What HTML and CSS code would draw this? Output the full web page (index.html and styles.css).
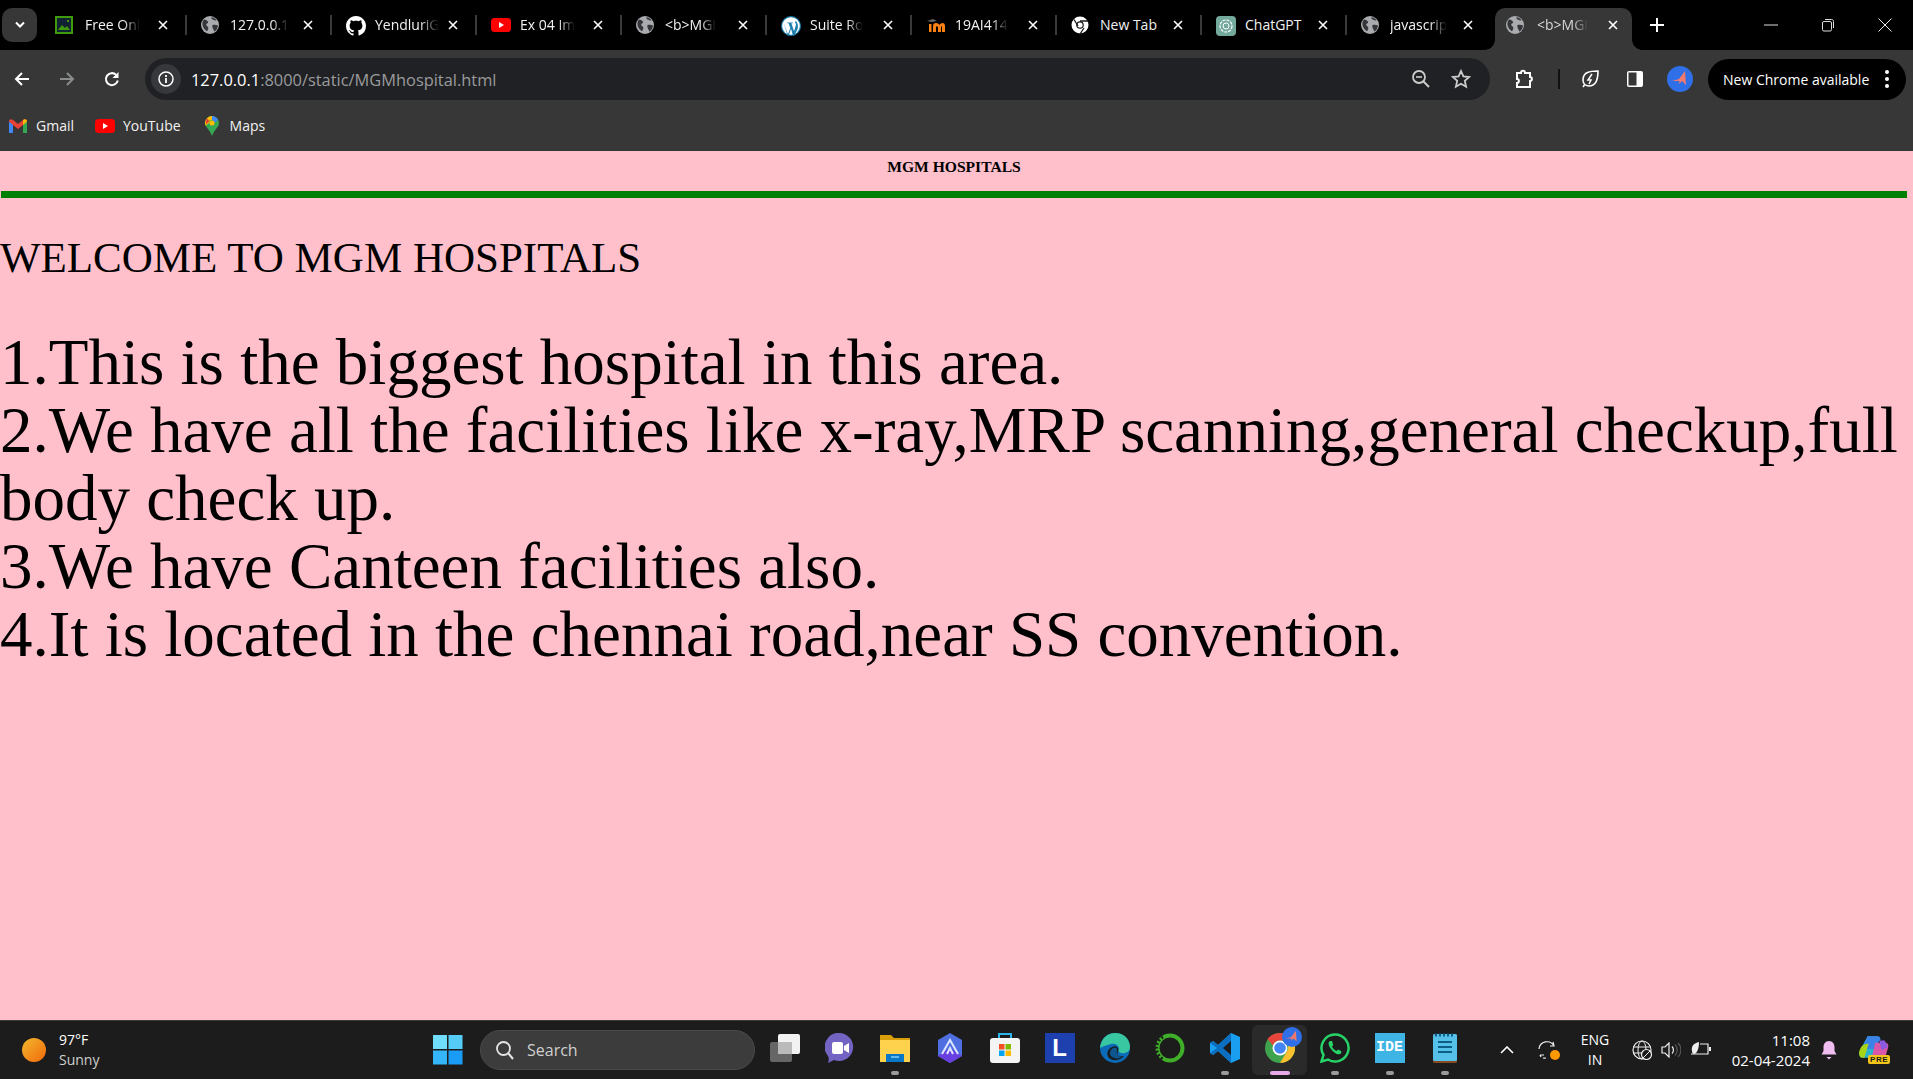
FILE: index.html
```html
<!DOCTYPE html>
<html lang="en">
<head>
<meta charset="utf-8">
<title>MGM Hospital</title>
<link rel="stylesheet" href="styles.css">
</head>
<body>
<svg class="sprite" width="0" height="0" aria-hidden="true">
  <defs>
    <symbol id="globe" viewBox="0 0 18 18">
      <circle cx="9" cy="9" r="9" fill="#a9abae"/>
      <path d="M3 3.500c2 .2 3.400 1 4 2.200.5 1-.5 1.700-1.600 2-.6 1.500.6 2.500 1.600 3 .8 1 .2 2.800-1 4.500C3 13.500 1 10 1.500 7 1.700 5.500 2.200 4.500 3 3.500zM10.500 1.200c2 .3 3.800 1.300 5 3-1.300.5-2.300.1-3-.5-1-.2-2.300-.5-2-2.500zM11.500 9c1.500-.4 4-.4 5.500.5-.2 2.500-1.500 4.800-3.500 6.300-.5-1.800-2.800-4.300-2-6.800z" fill="#35363a"/>
    </symbol>
    <symbol id="x" viewBox="0 0 12 12">
      <path d="M2 2l8 8M10 2l-8 8" stroke="#fff" stroke-width="1.600" fill="none"/>
    </symbol>
  </defs>
</svg>

<header class="chrome">
  <div class="tabstrip">
    <button class="tab-menu"><svg width="12" height="8" viewBox="0 0 12 8"><path d="M2 1.500l4 4 4-4" stroke="#fff" stroke-width="2" fill="none"/></svg></button>
    <div class="tab tab-first">
      <svg class="fav" width="18" height="18" viewBox="0 0 18 18"><rect x="1" y="1" width="16" height="16" fill="#123" stroke="#3f9b0b" stroke-width="2"/><path d="M3 14l4-5 3 3 2-2 3 4z" fill="#3f9b0b"/><rect x="12" y="4" width="2" height="2" fill="#3f9b0b"/></svg>
      <span class="title">Free Onl</span><svg class="close"><use href="#x"/></svg>
    </div>
    <div class="tab">
      <svg class="fav" width="18" height="18"><use href="#globe"/></svg>
      <span class="title">127.0.0.1</span><svg class="close"><use href="#x"/></svg>
    </div>
    <div class="tab">
      <svg class="fav" width="20" height="20" viewBox="0 0 16 16"><path fill="#fff" d="M8 0C3.580 0 0 3.580 0 8c0 3.540 2.290 6.530 5.470 7.590.4.070.55-.17.55-.38v-1.340c-2.230.49-2.700-1.070-2.700-1.070-.36-.92-.89-1.170-.89-1.170-.73-.5.050-.49.050-.49.8.060 1.230.83 1.230.83.71 1.220 1.870.870 2.330.660.070-.52.280-.87.510-1.070-1.780-.2-3.640-.89-3.640-3.950 0-.87.310-1.590.820-2.150-.08-.2-.36-1.020.080-2.120 0 0 .67-.21 2.200.82.640-.18 1.320-.27 2-.27s1.360.09 2 .27c1.530-1.040 2.200-.82 2.200-.82.440 1.100.160 1.920.080 2.120.51.560.820 1.270.820 2.150 0 3.070-1.870 3.750-3.650 3.950.290.250.540.730.540 1.480v2.200c0 .210.150.460.550.380A8.010 8.010 0 0 0 16 8c0-4.420-3.580-8-8-8z"/></svg>
      <span class="title">YendluriG</span><svg class="close"><use href="#x"/></svg>
    </div>
    <div class="tab">
      <svg class="fav fav-wide" width="20" height="14" viewBox="0 0 20 14"><rect width="20" height="14" rx="3.500" fill="#f00"/><path d="M8 4l5 3-5 3z" fill="#fff"/></svg>
      <span class="title">Ex 04 Im</span><svg class="close"><use href="#x"/></svg>
    </div>
    <div class="tab">
      <svg class="fav" width="18" height="18"><use href="#globe"/></svg>
      <span class="title">&lt;b&gt;MGI</span><svg class="close"><use href="#x"/></svg>
    </div>
    <div class="tab">
      <svg class="fav" width="20" height="20" viewBox="0 0 20 20"><circle cx="10" cy="10" r="10" fill="#1d7fad"/><circle cx="10" cy="10" r="8.800" fill="#fff"/><path d="M2.400 6.500L7 18.300l2.300-6.400-1.700-4.600H6.300V6.500h5.500v.8h-1.400L13 15.200l1.800-5.700c.5-1.700-.3-2.300-.8-2.700-.4-.8.300-1.700 1.200-1.500 1.700 2.200 2.300 5.300 1.300 8l-3.400 6.600h-1L10 12.800l-2.300 6.900h-.9z" fill="#1d7fad"/></svg>
      <span class="title">Suite Ro</span><svg class="close"><use href="#x"/></svg>
    </div>
    <div class="tab">
      <svg class="fav fav-wide" width="20" height="16" viewBox="0 0 20 16"><path d="M1 3l6-2 4 2-5 1z" fill="#666"/><path d="M3 14V6h2.500v8zM7 14V8c0-2 1-3 3-3s3 1 3.500 2c.5-1 1.500-2 3-2s2.500 1 2.500 3v6h-3V8.500h-1V14H12V8.500h-2V14z" fill="#f98012"/></svg>
      <span class="title">19AI414</span><svg class="close"><use href="#x"/></svg>
    </div>
    <div class="tab">
      <svg class="fav" width="18" height="18" viewBox="0 0 18 18"><circle cx="9" cy="9" r="8.500" fill="#fff"/><circle cx="9" cy="9" r="3.800" fill="#1a1a1a"/><circle cx="9" cy="9" r="2.600" fill="#fff"/><path d="M3 3.500L7 10M9 5h8M13 12l-4 6" stroke="#1a1a1a" stroke-width="1.300"/></svg>
      <span class="title title-full">New Tab</span><svg class="close"><use href="#x"/></svg>
    </div>
    <div class="tab">
      <svg class="fav" width="20" height="20" viewBox="0 0 20 20"><rect width="20" height="20" rx="4" fill="#74aa9c"/><circle cx="10" cy="10" r="6" fill="none" stroke="#fff" stroke-width="1.200" stroke-dasharray="3 1"/><circle cx="10" cy="10" r="3" fill="none" stroke="#fff"/></svg>
      <span class="title title-full">ChatGPT</span><svg class="close"><use href="#x"/></svg>
    </div>
    <div class="tab tab-last">
      <svg class="fav" width="18" height="18"><use href="#globe"/></svg>
      <span class="title">javascrip</span><svg class="close"><use href="#x"/></svg>
    </div>
    <div class="tab tab-active">
      <svg class="fav" width="18" height="18"><use href="#globe"/></svg>
      <span class="title">&lt;b&gt;MGI</span><svg class="close"><use href="#x"/></svg>
    </div>
    <svg class="newtab" width="14" height="14" viewBox="0 0 14 14"><path d="M7 0v14M0 7h14" stroke="#fff" stroke-width="2"/></svg>
    <div class="winctl">
      <svg width="14" height="14" viewBox="0 0 14 14"><path d="M0 7h14" stroke="#ddd"/></svg>
      <svg width="14" height="14" viewBox="0 0 14 14"><rect x="1.500" y="3.500" width="9" height="9.500" rx="1.500" fill="none" stroke="#ddd"/><path d="M4 1.500h6.500c1.500 0 2 .8 2 2V10" fill="none" stroke="#ddd"/></svg>
      <svg width="14" height="14" viewBox="0 0 14 14"><path d="M.5.500l13 13M13.500.500l-13 13" stroke="#eee"/></svg>
    </div>
  </div>

  <div class="toolbar">
    <svg class="tb-back" width="16" height="16" viewBox="0 0 16 16"><path d="M15 8H2M8 2L2 8l6 6" stroke="#fff" stroke-width="2" fill="none"/></svg>
    <svg class="tb-fwd" width="16" height="16" viewBox="0 0 16 16"><path d="M1 8h13M8 2l6 6-6 6" stroke="#8a8b8d" stroke-width="2" fill="none"/></svg>
    <svg class="tb-reload" width="16" height="16" viewBox="0 0 16 16"><path d="M13.800 9.500A6 6 0 1 1 12 3.700" stroke="#fff" stroke-width="2" fill="none"/><path d="M14.500 1v6h-6z" fill="#fff"/></svg>
    <div class="omnibox">
      <span class="site-info"><svg width="16" height="16" viewBox="0 0 16 16"><circle cx="8" cy="8" r="7" fill="none" stroke="#fff" stroke-width="1.500"/><path d="M8 7v5M8 4v2" stroke="#fff" stroke-width="1.800"/></svg></span>
      <span class="url"><b class="host">127.0.0.1</b>:8000/static/MGMhospital.html</span>
      <svg class="omni-zoom" width="20" height="20" viewBox="0 0 20 20"><circle cx="8" cy="8" r="6" fill="none" stroke="#ccc" stroke-width="1.800"/><path d="M5 8h6" stroke="#ccc" stroke-width="1.600"/><path d="M12.500 12.500L18 18" stroke="#ccc" stroke-width="2"/></svg>
      <svg class="omni-star" width="20" height="20" viewBox="0 0 20 20"><path d="M10 2l2.400 5.400 5.800.6-4.400 3.900 1.300 5.800L10 14.700l-5.100 3 1.300-5.800L1.800 8l5.800-.6z" fill="none" stroke="#ccc" stroke-width="1.800"/></svg>
    </div>
    <svg class="ext" width="20" height="20" viewBox="0 0 20 20"><path d="M3 4h4c0-3 4-3 4 0h5v4c2.500 0 2.500 4 0 4v6H3v-4c2.500 0 2.500-4 0-4z" fill="none" stroke="#fff" stroke-width="2"/></svg>
    <span class="tool-sep"></span>
    <svg class="leaf" width="20" height="20" viewBox="0 0 20 20"><path d="M18 2c-8 0-15 1-15 9 0 4 3 6 6 6 7 0 9-7 9-15zM3 18l2-3" fill="none" stroke="#fff" stroke-width="1.600"/><path d="M12 5l-4 6h3l-2 4" fill="none" stroke="#fff" stroke-width="1.500"/></svg>
    <svg class="panel" width="18" height="18" viewBox="0 0 18 18"><rect x="1" y="1" width="16" height="16" rx="2" fill="#fff"/><rect x="2.500" y="2.500" width="8" height="13" fill="#373737"/></svg>
    <svg class="avatar" width="26" height="26" viewBox="0 0 26 26"><circle cx="13" cy="13" r="13" fill="#2f6fe8"/><path d="M5 15l7-2 6-8 1 14-4-4-3 3 .5-3z" fill="#f27a6c"/></svg>
    <div class="update"><span>New Chrome available</span><svg width="4" height="18" viewBox="0 0 4 18"><circle cx="2" cy="2" r="2" fill="#fff"/><circle cx="2" cy="9" r="2" fill="#fff"/><circle cx="2" cy="16" r="2" fill="#fff"/></svg></div>
  </div>

  <nav class="bookmarks">
    <a class="bm"><svg width="18" height="14" viewBox="0 0 18 14"><path d="M0 2.500V14h4V5z" fill="#4285f4"/><path d="M14 5v9h4V2.500z" fill="#34a853"/><path d="M0 2.500C0 .5 2 -.5 4 1l5 4 5-4c2-1.500 4-.5 4 1.500L14 6l-5 4-5-4z" fill="#ea4335"/><path d="M14 1c2-1.500 4-.5 4 1.500L14 6z" fill="#fbbc04"/></svg><span>Gmail</span></a>
    <a class="bm"><svg width="20" height="14" viewBox="0 0 20 14"><rect width="20" height="14" rx="3.500" fill="#f00"/><path d="M8 4l5 3-5 3z" fill="#fff"/></svg><span>YouTube</span></a>
    <a class="bm"><svg width="14" height="20" viewBox="0 0 14 20"><path d="M7 0a7 7 0 0 1 7 7c0 4-5 7-7 13-2-6-7-9-7-13a7 7 0 0 1 7-7z" fill="#34a853"/><path d="M2 2.200A7 7 0 0 1 7 0v4a3 3 0 0 0-3 3L.6 9.800A7 7 0 0 1 2 2.200z" fill="#fbbc04"/><path d="M7 0a7 7 0 0 1 6 3.500L9.500 7A3 3 0 0 0 7 4z" fill="#4285f4"/><path d="M2 2.200L4.500 5 1 8.500A7 7 0 0 1 2 2.200z" fill="#ea4335"/><circle cx="7" cy="7" r="2.500" fill="#fbbc04"/></svg><span>Maps</span></a>
  </nav>
</header>

<main class="page">
  <h1 class="page-title">MGM HOSPITALS</h1>
  <hr class="rule">
  <h2 class="welcome">WELCOME TO MGM HOSPITALS</h2>
  <p class="facts">1.This is the biggest hospital in this area.<br>2.We have all the facilities like x-ray,MRP scanning,general checkup,full<br>body check up.<br>3.We have Canteen facilities also.<br>4.It is located in the chennai road,near SS convention.</p>
</main>

<footer class="taskbar">
  <div class="weather">
    <span class="sun"></span>
    <div class="weather-text"><span class="temp">97°F</span><span class="cond">Sunny</span></div>
  </div>
  <svg class="start" width="30" height="30" viewBox="0 0 30 30"><rect x="0" y="0" width="14" height="14" fill="#6fdcfb"/><rect x="15.500" y="0" width="14" height="14" fill="#55ccf8"/><rect x="0" y="15.500" width="14" height="14" fill="#33b5f8"/><rect x="15.500" y="15.500" width="14" height="14" fill="#1a9bf5"/></svg>
  <div class="search"><svg width="20" height="20" viewBox="0 0 20 20"><circle cx="8.500" cy="8.500" r="6.500" fill="none" stroke="#e5e5e5" stroke-width="1.800"/><path d="M13 13l5 6" stroke="#e5e5e5" stroke-width="2"/></svg><span>Search</span></div>
  <div class="pinned">
    <div class="pin"><svg width="30" height="30" viewBox="0 0 30 30"><rect x="0" y="9" width="22" height="20" rx="2" fill="#666"/><rect x="8" y="1" width="22" height="20" rx="2" fill="#f2f2f2"/><rect x="8" y="9" width="14" height="12" fill="#bbb"/></svg></div>
    <div class="pin"><svg width="30" height="30" viewBox="0 0 30 30"><path d="M15 0a14 14 0 1 1-6 27l-6 3c1-3 1-5 0-7A14 14 0 0 1 15 0z" fill="#7364c4"/><rect x="7" y="9" width="11" height="12" rx="2" fill="#fff"/><path d="M19 13l5-3v10l-5-3z" fill="#fff"/></svg></div>
    <div class="pin"><svg width="30" height="30" viewBox="0 0 30 30"><path d="M0 2h11l3 3h16v24H0z" fill="#d99e0b"/><rect x="0" y="7" width="30" height="22" fill="#ffd24d"/><path d="M6 21h18v8H6z" fill="#0a78c8"/><path d="M11 24h8" stroke="#7fd0f5" stroke-width="1.500"/></svg><i class="dot"></i></div>
    <div class="pin"><svg width="28" height="30" viewBox="0 0 28 30"><path d="M14 0l12 7v16l-12 7-12-7V7z" fill="#4f6fe0"/><path d="M14 15l12 8-12 7-12-7z" fill="#6a3fe0"/><path d="M6 21L14 7l8 14M11 21l3-6 3 6" fill="none" stroke="#dfe6ff" stroke-width="2"/></svg></div>
    <div class="pin"><svg width="30" height="30" viewBox="0 0 30 30"><path d="M9 6V1h12v5" fill="none" stroke="#2cb5e8" stroke-width="2"/><rect y="5" width="30" height="25" rx="3" fill="#f4f4f4"/><rect x="9" y="11" width="5.500" height="5.500" fill="#f25022"/><rect x="15.500" y="11" width="5.500" height="5.500" fill="#7fba00"/><rect x="9" y="17.500" width="5.500" height="5.500" fill="#00a4ef"/><rect x="15.500" y="17.500" width="5.500" height="5.500" fill="#ffb900"/></svg></div>
    <div class="pin"><span class="app-l">L</span></div>
    <div class="pin"><svg width="30" height="30" viewBox="0 0 30 30"><circle cx="15" cy="15" r="15" fill="#0c6bb8"/><path d="M0 15C1 5 8 0 15 0c9 0 15 6 15 14 0 5-5 7-9 6-3-1-3-3-2-5-1-4-5-5-8-4-5 1-9 3-11 4z" fill="#38c7a0"/><path d="M12 14c4-2 8 1 6 5s2 5 6 4c-3 4-10 6-15 2-3-3-2-9 3-11z" fill="#1a1c1e"/><path d="M13 15c3-1 5 1 4 3s1 6 5 6c-3 2-8 2-11-1-2-3-1-6 2-8z" fill="#0f558f"/></svg></div>
    <div class="pin"><svg width="30" height="30" viewBox="0 0 30 30"><circle cx="15" cy="15" r="12.500" fill="none" stroke="#3fae29" stroke-width="4"/><path d="M8 4a12.500 12.500 0 0 0 0 22" fill="none" stroke="#1c1c1c" stroke-width="3" stroke-dasharray="2 2"/></svg></div>
    <div class="pin"><svg width="30" height="30" viewBox="0 0 30 30"><path d="M21 0l9 4v22l-9 4L8 18l-5 4-3-2v-10l3-2 5 4z" fill="#1a9ff0"/><path d="M21 0v30L8 18l-5 4-3-2 7-5-7-5 3-2 5 4z" fill="#0a6fc0"/><path d="M21 8l-8 7 8 7z" fill="#1c1c1c"/></svg><i class="dot"></i></div>
    <div class="pin pin-active"><svg width="30" height="30" viewBox="0 0 30 30"><circle cx="15" cy="15" r="15" fill="#3fa34d"/><path d="M15 0a15 15 0 0 1 13 7.500H15a7.500 7.500 0 0 0-7 5L2.500 6A15 15 0 0 1 15 0z" fill="#e8453c"/><path d="M28 7.500A15 15 0 0 1 15 30l6.500-11A7.500 7.500 0 0 0 21 9z" fill="#fbc02d"/><circle cx="15" cy="15" r="7.500" fill="#fff"/><circle cx="15" cy="15" r="5.800" fill="#4285f4"/></svg><svg class="pin-badge" width="20" height="20" viewBox="0 0 26 26"><circle cx="13" cy="13" r="13" fill="#2f6fe8"/><path d="M5 15l7-2 6-8 1 14-4-4-3 3 .5-3z" fill="#f27a6c"/></svg><i class="dot dot-active"></i></div>
    <div class="pin"><svg width="30" height="30" viewBox="0 0 30 30"><path d="M15 1.500a13.500 13.500 0 1 1-7 25L1.500 28.500 3.500 22A13.500 13.500 0 0 1 15 1.500z" fill="none" stroke="#25d366" stroke-width="2.500"/><path d="M10 8c-2 1-2 4 1 8s6 6 9 5c1.500-.5 1.500-2 1-3l-3-1.500-1.500 1.500c-2-.8-3.500-2.500-4.500-4.500l1.300-1.500L12 8z" fill="#25d366"/></svg><i class="dot"></i></div>
    <div class="pin"><span class="app-ide">IDE</span><i class="dot"></i></div>
    <div class="pin"><svg width="24" height="30" viewBox="0 0 24 30"><rect y="1" width="24" height="29" rx="1.500" fill="#8a4a20"/><rect y="1" width="24" height="27" rx="1.500" fill="#55c0e8"/><path d="M5 9h14M5 14h14M5 19h14" stroke="#0d5e85" stroke-width="2"/><path d="M2 2h20" stroke="#0d5e85" stroke-width="3" stroke-dasharray="2 2"/></svg><i class="dot"></i></div>
  </div>
  <div class="tray">
    <svg class="tray-chev" width="14" height="8" viewBox="0 0 14 8"><path d="M1 7l6-6 6 6" stroke="#fff" stroke-width="1.600" fill="none"/></svg>
    <span class="tray-sync"><svg width="20" height="20" viewBox="0 0 20 20"><path d="M1 9a8 8 0 0 1 15-3M15 2l1 4h-4M2 15h4M2 15l1 2M5 18a8 8 0 0 0 3 0" fill="none" stroke="#eee" stroke-width="1.200"/></svg><i class="sync-dot"></i></span>
    <div class="lang"><span>ENG</span><span>IN</span></div>
    <svg class="tray-net" width="20" height="20" viewBox="0 0 20 20"><circle cx="10" cy="10" r="9" fill="none" stroke="#eee" stroke-width="1.200"/><ellipse cx="10" cy="10" rx="4" ry="9" fill="none" stroke="#eee"/><path d="M1 7h18M1 13h18" stroke="#eee"/><circle cx="14.500" cy="14.500" r="5" fill="#1c1c1c" stroke="#eee" stroke-width="1.200"/><path d="M11 18l7-7" stroke="#eee"/></svg>
    <svg class="tray-vol" width="20" height="16" viewBox="0 0 20 16"><path d="M1 5h3l4-4v14l-4-4H1z" fill="none" stroke="#eee" stroke-width="1.200"/><path d="M11 4.500a5 5 0 0 1 0 7" fill="none" stroke="#eee" stroke-width="1.200"/><path d="M14 2.500a8 8 0 0 1 0 11M17 1a10 10 0 0 1 0 14" fill="none" stroke="#555" stroke-width="1.200"/></svg>
    <svg class="tray-bat" width="22" height="18" viewBox="0 0 22 18"><path d="M10 3h8v10H1" fill="none" stroke="#eee" stroke-width="1.200"/><rect x="19" y="6" width="2" height="4" fill="#eee"/><path d="M9 1C4 2 1 5 2 10c0 2 1 3 2 3C8 12 9 6 9 1z" fill="#eee"/></svg>
    <div class="clock"><span>11:08</span><span>02-04-2024</span></div>
    <svg class="tray-bell" width="16" height="20" viewBox="0 0 16 20"><path d="M8 1c3.500 0 5.500 3 5.500 6v4l2 3.500H.5l2-3.500V7C2.500 4 4.500 1 8 1z" fill="#efbdf0"/><path d="M5.500 17h5L8 19.500z" fill="#efbdf0"/></svg>
    <span class="copilot"><svg width="30" height="24" viewBox="0 0 28 22"><path d="M8 0h10l-5 20H3C0 20 0 17 1 13z" fill="#2bb3c9"/><path d="M8 0h9c2 0 3 1 3 3l-6 9H3z" fill="#3b82e8"/><path d="M0 15C2 8 5 7 9 7l-4 13H3C1 20 0 18 0 15z" fill="#a8d418"/><path d="M15 6h9c3 0 4 2 3 5l-2 7c-1 2-2 2-4 2h-9z" fill="#d957a8"/><path d="M19 4h5l3 6-6 3z" fill="#8a5be0"/></svg><b class="pre">PRE</b></span>
  </div>
</footer>
</body>
</html>
```

FILE: styles.css
```css
* { box-sizing: border-box; }
html, body { height: 100%; }
body {
  margin: 0;
  display: flex;
  flex-direction: column;
  overflow: hidden;
  background: #ffc0cb;
  font-family: "Open Sans", "Noto Sans", sans-serif;
}
.sprite { position: absolute; }

/* browser chrome */
.chrome { flex: none; background: #373737; color: #fff; }
.tabstrip {
  height: 50px;
  background: #000;
  display: flex;
  align-items: flex-end;
}
.tab-menu {
  width: 35px;
  height: 34px;
  margin: 0 4px 8px 2px;
  padding: 0;
  border: 0;
  border-radius: 10px;
  background: #373737;
  display: flex;
  align-items: center;
  justify-content: center;
}
.tab {
  position: relative;
  width: 145px;
  height: 42px;
  flex: none;
}
.tab::after {
  content: "";
  position: absolute;
  right: -1px;
  top: 7px;
  height: 20px;
  width: 2px;
  background: #3a3a3a;
}
.tab-last::after { display: none; }
.fav { position: absolute; left: 15px; top: 8px; }
.fav-wide { top: 10px; }
.tab-first .fav { left: 14px; }
.title {
  position: absolute;
  left: 44px;
  top: 7px;
  white-space: nowrap;
  font-size: 14px;
  line-height: 20px;
  color: #f2f2f2;
  -webkit-mask-image: linear-gradient(to right, #000 70%, transparent 100%);
  mask-image: linear-gradient(to right, #000 70%, transparent 100%);
}
.title-full { -webkit-mask-image: none; mask-image: none; }
.close { position: absolute; left: 116px; top: 11px; width: 12px; height: 12px; }
.tab-active {
  width: 137px;
  margin-left: 4px;
  background: #373737;
  border-radius: 10px 10px 0 0;
}
.tab-active::before, .tab-active::after {
  content: "";
  position: absolute;
  top: auto;
  bottom: 0;
  width: 10px;
  height: 10px;
}
.tab-active::before { left: -10px; background: radial-gradient(circle at 0 0, #000 9.500px, #373737 10px); }
.tab-active::after { right: -10px; background: radial-gradient(circle at 100% 0, #000 9.500px, #373737 10px); }
.tab-active .fav { left: 11px; }
.tab-active .title { left: 42px; color: #d7d7d7; }
.tab-active .close { left: 112px; }
.newtab { margin: 0 0 18px 18px; flex: none; }
.winctl {
  margin-left: auto;
  height: 50px;
  width: 171px;
  flex: none;
  padding-left: 22px;
  display: flex;
  align-items: center;
  gap: 43px;
}

.toolbar {
  height: 58px;
  display: flex;
  align-items: center;
  padding: 8px 7px 8px 14px;
}
.tb-back { margin-right: 29px; flex: none; }
.tb-fwd { margin-right: 29px; flex: none; }
.tb-reload { margin-right: 25px; flex: none; }
.omnibox {
  width: 1345px;
  height: 42px;
  border-radius: 21px;
  background: #202124;
  display: flex;
  align-items: center;
  padding: 0 19px 0 6px;
  flex: none;
}
.site-info {
  width: 30px;
  height: 30px;
  border-radius: 50%;
  background: #37383b;
  display: flex;
  align-items: center;
  justify-content: center;
  flex: none;
}
.url { margin-left: 10px; font-size: 16.400px; color: #9a9b9d; white-space: nowrap; flex: 1; }
.host { font-weight: 400; color: #fff; }
.omni-zoom { margin-right: 20px; }
.ext { margin: 0 24px 0 24px; flex: none; }
.tool-sep { width: 2px; height: 20px; background: #111; margin-right: 20px; flex: none; }
.leaf { margin-right: 26px; flex: none; }
.panel { margin-right: 23px; flex: none; }
.avatar { margin-right: 15px; flex: none; }
.update {
  width: 198px;
  height: 41px;
  border-radius: 21px;
  background: #000;
  display: flex;
  align-items: center;
  justify-content: space-between;
  padding: 0 17px 0 15px;
  font-size: 14px;
  flex: none;
}
.bookmarks {
  height: 43px;
  display: flex;
  align-items: center;
  padding: 0 0 8px 8px;
  gap: 21px;
}
.bm { display: flex; align-items: center; gap: 8px; font-size: 14px; color: #f2f2f2; }
.bm svg { width: 20px; flex: none; }

/* page */
.page {
  flex: 1;
  min-height: 0;
  background: #ffc0cb;
  color: #000;
  font-family: "Liberation Serif", serif;
  overflow: hidden;
}
.page-title {
  margin: 6px 0 0;
  padding-right: 5px;
  height: 20px;
  line-height: 20px;
  text-align: center;
  font-size: 15.600px;
  font-weight: 700;
}
.rule {
  margin: 14px 6px 0 1px;
  height: 7px;
  border: 0;
  background: #008000;
}
.welcome {
  margin: 35px 0 0;
  font-size: 43px;
  font-weight: 400;
  line-height: 50px;
}
.facts {
  margin: 45px 0 0;
  font-size: 65px;
  line-height: 68px;
}

/* taskbar */
.taskbar {
  flex: none;
  height: 59px;
  background: #1c1c1c;
  border-top: 1px solid #3a3a3a;
  color: #fff;
  display: flex;
  align-items: center;
}
.weather { width: 433px; flex: none; display: flex; align-items: center; padding-left: 22px; gap: 13px; }
.sun { width: 24px; height: 24px; border-radius: 50%; background: linear-gradient(135deg, #f2b72c, #f26a0c); }
.weather-text { display: flex; flex-direction: column; font-size: 14px; line-height: 20px; }
.cond { color: #cfcfcf; }
.start { flex: none; }
.search {
  width: 275px;
  height: 40px;
  margin: 0 0 0 17px;
  flex: none;
  border-radius: 20px;
  background: #3c3c3c;
  border: 1px solid #4a4a4a;
  display: flex;
  align-items: center;
  gap: 12px;
  padding-left: 14px;
  font-size: 16px;
  color: #cfcfcf;
}
.pinned { display: flex; margin-left: 2px; flex: none; }
.pin {
  position: relative;
  width: 55px;
  height: 50px;
  flex: none;
  display: flex;
  align-items: center;
  justify-content: center;
  padding-bottom: 4px;
}
.pin-active { background: #2a2a2a; border-radius: 6px; }
.pin-badge { position: absolute; right: 5px; top: 2px; }
.dot {
  position: absolute;
  left: 50%;
  bottom: 0;
  width: 8px;
  height: 4px;
  margin-left: -4px;
  border-radius: 2px;
  background: #9a9a9a;
}
.dot-active { width: 20px; margin-left: -10px; background: #e6a8e8; }
.app-l {
  width: 30px;
  height: 30px;
  background: #1e3fae;
  color: #fff;
  font: 700 24px/30px "Liberation Sans", sans-serif;
  text-align: center;
}
.app-ide {
  width: 30px;
  height: 30px;
  background: #3db4e4;
  color: #fff;
  font: 700 15px/30px "Liberation Mono", monospace;
  text-align: center;
}
.tray { display: flex; align-items: center; flex: none; margin-left: 28px; }
.tray-chev { margin-right: 24px; flex: none; }
.tray-sync { position: relative; width: 20px; height: 20px; margin-right: 20px; flex: none; }
.sync-dot { position: absolute; right: -2px; bottom: 0; width: 10px; height: 10px; border-radius: 50%; background: #ff9800; }
.lang {
  width: 34px;
  display: flex;
  flex-direction: column;
  align-items: center;
  font-size: 14px;
  line-height: 20px;
  margin-right: 20px;
  flex: none;
}
.tray-net { margin-right: 9px; flex: none; }
.tray-vol { margin-right: 9px; flex: none; }
.tray-bat { flex: none; }
.clock {
  width: 98px;
  display: flex;
  flex-direction: column;
  align-items: flex-end;
  font-size: 15px;
  line-height: 20px;
  flex: none;
  margin-right: 11px;
}
.tray-bell { margin-right: 22px; flex: none; }
.copilot { position: relative; width: 28px; height: 28px; flex: none; }
.pre {
  position: absolute;
  right: -3px;
  bottom: 0;
  padding: 0 2px;
  border-radius: 2px;
  background: #f5c518;
  color: #1c1c1c;
  font: 800 8px/9px "Liberation Sans", sans-serif;
  letter-spacing: .5px;
}
```
